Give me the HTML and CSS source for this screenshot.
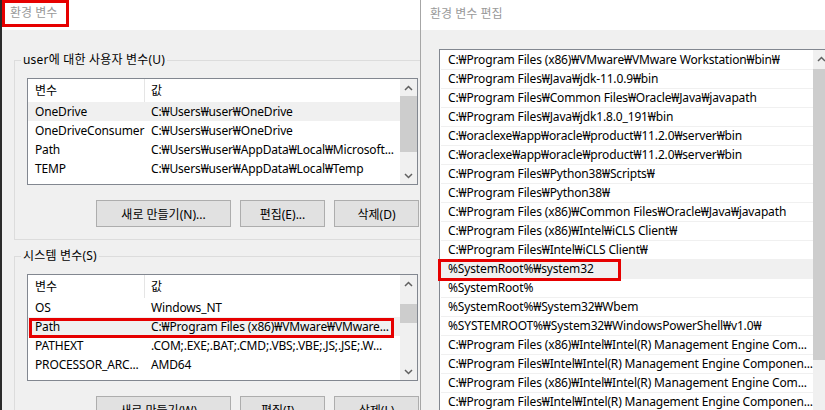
FILE: index.html
```html
<!DOCTYPE html>
<html lang="ko">
<head>
    <meta charset="UTF-8">
    <title>환경 변수</title>
    <link rel="stylesheet" href="styles.css">
</head>
<body>

<div class="desktop">

    <!-- 환경 변수 window (behind) -->
    <div class="window env">
        <div class="titlebar">
            <span class="title marked">환경 변수</span>
        </div>
        <div class="win-body">

            <fieldset class="group">
                <legend>user에 대한 사용자 변수(U)</legend>
                <div class="group-inner">
                    <div class="listview">
                        <div class="lv-main">
                            <div class="lv-head"><span class="c1">변수</span><span class="c2">값</span></div>
                            <div class="lv-row sel"><span class="c1">OneDrive</span><span class="c2">C:₩Users₩user₩OneDrive</span></div>
                            <div class="lv-row"><span class="c1">OneDriveConsumer</span><span class="c2">C:₩Users₩user₩OneDrive</span></div>
                            <div class="lv-row"><span class="c1">Path</span><span class="c2">C:₩Users₩user₩AppData₩Local₩Microsoft...</span></div>
                            <div class="lv-row"><span class="c1">TEMP</span><span class="c2">C:₩Users₩user₩AppData₩Local₩Temp</span></div>
                        </div>
                        <div class="scrollbar">
                            <div class="sb-btn">
                                <svg width="9" height="6" viewBox="0 0 9 6"><path d="M1 5 L4.5 1.5 L8 5" /></svg>
                            </div>
                            <div class="sb-track"><div class="sb-thumb user-thumb"></div></div>
                            <div class="sb-btn">
                                <svg width="9" height="6" viewBox="0 0 9 6"><path d="M1 1 L4.5 4.5 L8 1" /></svg>
                            </div>
                        </div>
                    </div>
                    <div class="btn-row">
                        <button class="btn wide">새로 만들기(N)...</button>
                        <button class="btn">편집(E)...</button>
                        <button class="btn">삭제(D)</button>
                    </div>
                </div>
            </fieldset>

            <fieldset class="group">
                <legend>시스템 변수(S)</legend>
                <div class="group-inner">
                    <div class="listview">
                        <div class="lv-main">
                            <div class="lv-head"><span class="c1">변수</span><span class="c2">값</span></div>
                            <div class="lv-row"><span class="c1">OS</span><span class="c2">Windows_NT</span></div>
                            <div class="lv-row sel">
                                <span class="c1">Path</span><span class="c2">C:₩Program Files (x86)₩VMware₩VMware...</span>
                                <span class="mark-box path-mark"></span>
                            </div>
                            <div class="lv-row"><span class="c1">PATHEXT</span><span class="c2">.COM;.EXE;.BAT;.CMD;.VBS;.VBE;.JS;.JSE;.W...</span></div>
                            <div class="lv-row"><span class="c1">PROCESSOR_ARC...</span><span class="c2">AMD64</span></div>
                        </div>
                        <div class="scrollbar">
                            <div class="sb-btn">
                                <svg width="9" height="6" viewBox="0 0 9 6"><path d="M1 5 L4.5 1.5 L8 5" /></svg>
                            </div>
                            <div class="sb-track"><div class="sb-thumb system-thumb"></div></div>
                            <div class="sb-btn">
                                <svg width="9" height="6" viewBox="0 0 9 6"><path d="M1 1 L4.5 4.5 L8 1" /></svg>
                            </div>
                        </div>
                    </div>
                    <div class="btn-row">
                        <button class="btn wide">새로 만들기(W)...</button>
                        <button class="btn">편집(I)...</button>
                        <button class="btn">삭제(L)</button>
                    </div>
                </div>
            </fieldset>

        </div>
    </div>

    <!-- 환경 변수 편집 window (front) -->
    <div class="window edit">
        <div class="titlebar">
            <span class="title">환경 변수 편집</span>
        </div>
        <div class="win-body">
            <div class="pathlist">
                <div class="pl-rows">
                    <div class="pl-row">C:₩Program Files (x86)₩VMware₩VMware Workstation₩bin₩</div>
                    <div class="pl-row">C:₩Program Files₩Java₩jdk-11.0.9₩bin</div>
                    <div class="pl-row">C:₩Program Files₩Common Files₩Oracle₩Java₩javapath</div>
                    <div class="pl-row">C:₩Program Files₩Java₩jdk1.8.0_191₩bin</div>
                    <div class="pl-row">C:₩oraclexe₩app₩oracle₩product₩11.2.0₩server₩bin</div>
                    <div class="pl-row">C:₩oraclexe₩app₩oracle₩product₩11.2.0₩server₩bin</div>
                    <div class="pl-row">C:₩Program Files₩Python38₩Scripts₩</div>
                    <div class="pl-row">C:₩Program Files₩Python38₩</div>
                    <div class="pl-row">C:₩Program Files (x86)₩Common Files₩Oracle₩Java₩javapath</div>
                    <div class="pl-row">C:₩Program Files (x86)₩Intel₩iCLS Client₩</div>
                    <div class="pl-row">C:₩Program Files₩Intel₩iCLS Client₩</div>
                    <div class="pl-row sel">%SystemRoot%₩system32<span class="mark-box row-mark"></span></div>
                    <div class="pl-row">%SystemRoot%</div>
                    <div class="pl-row">%SystemRoot%₩System32₩Wbem</div>
                    <div class="pl-row">%SYSTEMROOT%₩System32₩WindowsPowerShell₩v1.0₩</div>
                    <div class="pl-row">C:₩Program Files (x86)₩Intel₩Intel(R) Management Engine Com...</div>
                    <div class="pl-row">C:₩Program Files₩Intel₩Intel(R) Management Engine Componen...</div>
                    <div class="pl-row">C:₩Program Files (x86)₩Intel₩Intel(R) Management Engine Com...</div>
                    <div class="pl-row">C:₩Program Files₩Intel₩Intel(R) Management Engine Componen...</div>
                </div>
                <div class="scrollbar tall">
                    <div class="sb-btn">
                        <svg width="9" height="6" viewBox="0 0 9 6"><path d="M1 5 L4.5 1.5 L8 5" /></svg>
                    </div>
                    <div class="sb-track"><div class="sb-thumb edit-thumb"></div></div>
                </div>
            </div>
        </div>
    </div>

</div>

</body>
</html>
```

FILE: styles.css
```css
* {
    box-sizing: border-box;
    margin: 0;
    padding: 0;
}

body {
    width: 825px;
    height: 410px;
    overflow: hidden;
    background-color: #f0f0f0;
    color: #000;
    font-family: "Noto Sans", "Noto Sans CJK KR", sans-serif;
    font-size: 12px;
}

.desktop {
    display: flex;
    height: 410px;
}

/* windows */

.window {
    display: flex;
    flex-direction: column;
    flex-shrink: 0;
    height: 410px;
    overflow: hidden;
    background-color: #f0f0f0;
}

.env {
    width: 420px;
    border-left: 2px solid #2b2b2b;
}

.edit {
    width: 405px;
    border-left: 1px solid #a6a6a6;
}

.titlebar {
    height: 30px;
    flex-shrink: 0;
    display: flex;
    align-items: flex-start;
    background-color: #fff;
}

.title {
    color: #999;
    line-height: 28px;
    padding-left: 9px;
}

.title.marked {
    width: 67px;
    height: 27px;
    line-height: 20px;
    padding-left: 5px;
    border: 3px solid #e60000;
}

.mark-box {
    position: absolute;
    border: 3px solid #e60000;
    pointer-events: none;
}

/* group boxes */

.win-body {
    flex: 1;
    padding-top: 22px;
}

.group {
    width: 419px;
    margin-left: 12px;
    border: 1px solid #dcdcdc;
    padding: 0;
}

.group + .group {
    margin-top: 8px;
}

.group legend {
    margin-left: 6px;
    padding: 0 2px;
    line-height: 16px;
    letter-spacing: 0.2px;
}

.group-inner {
    padding: 10px 12px 12px;
}

/* list view */

.listview {
    display: flex;
    width: 391px;
    height: 107px;
    border: 1px solid #828790;
    background-color: #fff;
}

.lv-main {
    flex: 1;
    overflow: hidden;
}

.lv-head,
.lv-row {
    display: flex;
    white-space: nowrap;
}

.lv-head {
    height: 23px;
    line-height: 23px;
}

.lv-row {
    position: relative;
    height: 19px;
    line-height: 19px;
    letter-spacing: -0.15px;
}

.lv-row.sel {
    background-color: #f0f0f0;
}

.c1 {
    width: 117px;
    flex-shrink: 0;
    padding-left: 7px;
    overflow: hidden;
}

.lv-head .c1 {
    border-right: 1px solid #e5e5e5;
}

.c2 {
    flex: 1;
    padding-left: 6px;
    overflow: hidden;
    text-overflow: ellipsis;
}

.path-mark {
    left: 1px;
    top: 1px;
    width: 365px;
    height: 20px;
}

/* scrollbars */

.scrollbar {
    width: 17px;
    flex-shrink: 0;
    display: flex;
    flex-direction: column;
    background-color: #f0f0f0;
}

.sb-btn {
    height: 17px;
    display: flex;
    align-items: center;
    justify-content: center;
}

.sb-btn path {
    fill: none;
    stroke: #606060;
    stroke-width: 1.5;
}

.sb-track {
    flex: 1;
}

.sb-thumb {
    background-color: #cdcdcd;
}

.user-thumb {
    height: 56px;
}

.system-thumb {
    margin-top: 12px;
    height: 19px;
}

.edit-thumb {
    margin-top: 2px;
    height: 291px;
}

/* buttons */

.btn-row {
    display: flex;
    justify-content: flex-end;
    gap: 9px;
    margin-top: 15px;
    padding-right: 1px;
}

.btn {
    width: 85px;
    height: 27px;
    background-color: #e1e1e1;
    border: 1px solid #adadad;
    font-family: inherit;
    font-size: 12px;
    color: #000;
}

.btn.wide {
    width: 135px;
}

/* path list (edit window) */

.edit .win-body {
    padding-top: 19px;
    padding-left: 18px;
}

.pathlist {
    display: flex;
    width: 392px;
    height: 400px;
    border: 1px solid #828790;
    background-color: #fff;
}

.pl-rows {
    flex: 1;
    padding-top: 1px;
}

.pl-row {
    position: relative;
    height: 19px;
    line-height: 18px;
    padding-left: 7px;
    margin-left: 1px;
    border-bottom: 1px solid #f0f0f0;
    white-space: nowrap;
    letter-spacing: -0.15px;
}

.pl-row.sel {
    background-color: #f0f0f0;
}

.row-mark {
    left: -3px;
    top: -1px;
    width: 183px;
    height: 22px;
}

.scrollbar.tall {
    height: 100%;
}
```
